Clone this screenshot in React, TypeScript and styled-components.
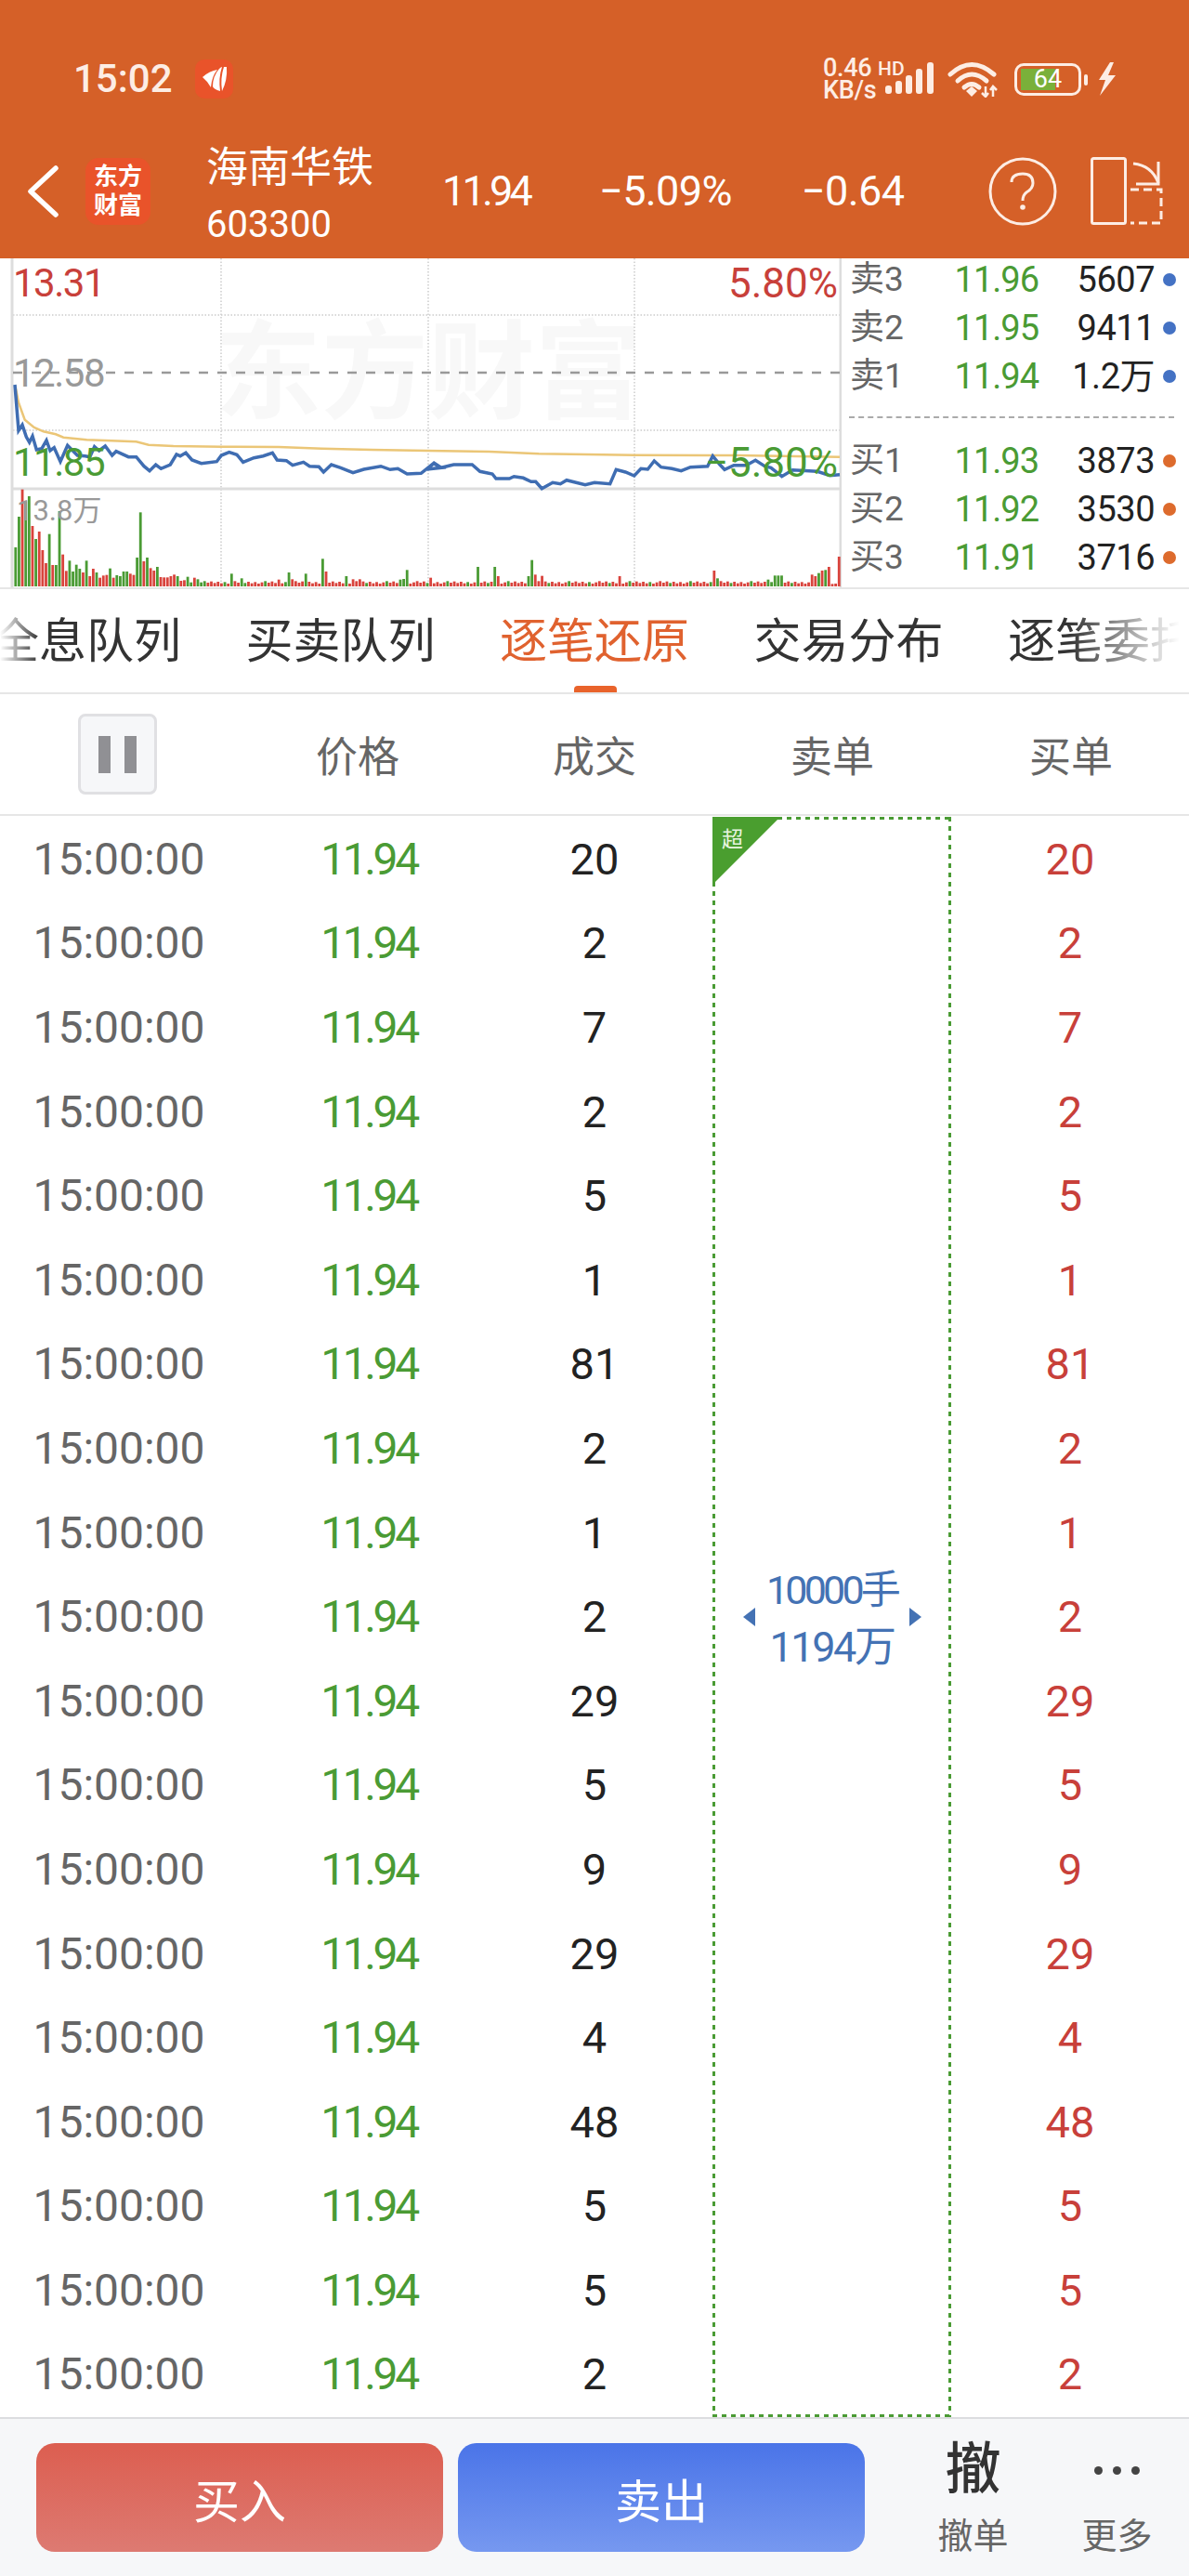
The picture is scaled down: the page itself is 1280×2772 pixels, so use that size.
import React from "react";
import styled, { createGlobalStyle } from "styled-components";

const GlobalStyle = createGlobalStyle`
    html, body {
        margin: 0;
        padding: 0;
        background: #fff;
    }
    #root {
        width: 1280px;
        height: 2772px;
        overflow: hidden;
    }
`;

const RED = "#C8403A";
const GREEN = "#4A9B34";
const BLUE = "#4472B4";
const ORANGE = "#DD6B2D";
const SOFT = "#FDEDE4";
const FONT = `Roboto, "Noto Sans CJK SC", sans-serif`;

const Page = styled.div`
    width: 1280px;
    height: 2772px;
    display: flex;
    flex-direction: column;
    font-family: ${FONT};
    background: #fff;
`;

const Header = styled.header`
    height: 278px;
    background: #d56028;
    color: #fff;
    flex-shrink: 0;
`;

const StatusBar = styled.div`
    height: 150px;
    box-sizing: border-box;
    padding: 60px 0 40px 79px;
    display: flex;
    align-items: center;
    color: ${SOFT};
`;

const Clock = styled.span`
    font-size: 42px;
    font-weight: 500;
    line-height: 50px;
    width: 131px;
`;

const AppBadge = styled.svg`
    width: 41px;
    height: 42px;
    display: block;
`;

const StatusRight = styled.div`
    margin-left: auto;
    margin-right: 78px;
    display: flex;
    align-items: center;
`;

const Speed = styled.div`
    font-size: 27px;
    font-weight: 500;
    line-height: 24px;
    width: 56px;
    margin-right: 11px;
    letter-spacing: -0.3px;
`;

const SignalBox = styled.div`
    position: relative;
    width: 52px;
    height: 40px;
    margin-right: 15px;
`;

const HdMark = styled.span`
    position: absolute;
    left: -8px;
    top: -1px;
    font-size: 21px;
    font-weight: 500;
    line-height: 20px;
`;

const Battery = styled.div`
    position: relative;
    width: 72px;
    height: 35px;
    box-sizing: border-box;
    border: 3px solid ${SOFT};
    border-radius: 10px;
    margin-left: 18px;
    display: flex;
    align-items: center;
    justify-content: center;
    &::before {
        content: "";
        position: absolute;
        left: 4px;
        top: 3px;
        bottom: 3px;
        width: 37px;
        background: #7ab03a;
    }
    &::after {
        content: "";
        position: absolute;
        right: -10px;
        top: 9px;
        width: 4px;
        height: 12px;
        border-radius: 2px;
        background: ${SOFT};
    }
`;

const BatteryText = styled.span`
    position: relative;
    font-size: 27px;
    line-height: 29px;
    color: #fff;
`;

const Bolt = styled.svg`
    width: 22px;
    height: 36px;
    margin-left: 16px;
`;

const Toolbar = styled.div`
    height: 128px;
    box-sizing: border-box;
    padding: 0 0 16px 29px;
    display: flex;
    align-items: center;
`;

const BackIcon = styled.svg`
    width: 34px;
    height: 56px;
    flex-shrink: 0;
`;

const Logo = styled.div`
    width: 70px;
    height: 72px;
    margin-left: 29px;
    flex-shrink: 0;
    border-radius: 14px;
    background: #e9532a;
    font-size: 26px;
    font-weight: 700;
    line-height: 31px;
    text-align: center;
    display: flex;
    flex-direction: column;
    justify-content: center;
`;

const NameBlock = styled.div`
    width: 254px;
    margin-left: 60px;
    margin-bottom: -10px;
    flex-shrink: 0;
`;

const StockName = styled.div`
    font-size: 45px;
    line-height: 62px;
`;

const StockCode = styled.div`
    font-size: 40px;
    line-height: 60px;
`;

const Quotes = styled.div`
    display: flex;
    gap: 75px;
    font-size: 45px;
    line-height: 50px;
`;

const Quote = styled.span<{ $tight?: boolean }>`
    letter-spacing: ${(p) => (p.$tight ? -3.8 : -0.6)}px;
`;

const HelpIcon = styled.svg`
    width: 74px;
    height: 74px;
    margin-left: auto;
    flex-shrink: 0;
`;

const FlipIcon = styled.svg`
    width: 80px;
    height: 74px;
    margin: 0 27px 0 35px;
    flex-shrink: 0;
`;

const MarketRow = styled.section`
    height: 356px;
    flex-shrink: 0;
    box-sizing: border-box;
    border-bottom: 2px solid #e6e6e6;
    display: flex;
`;

const Chart = styled.div`
    position: relative;
    width: 906px;
    height: 354px;
    flex-shrink: 0;
    overflow: hidden;
`;

const ChartSvg = styled.svg`
    position: absolute;
    inset: 0;
    display: block;
`;

const Watermark = styled.div`
    position: absolute;
    left: 231px;
    top: 62px;
    font-size: 115px;
    line-height: 124px;
    font-weight: 700;
    color: #f8f8f8;
    white-space: nowrap;
`;

const ChartLabel = styled.span<{ $color: string; $top: number; $right?: boolean; $small?: boolean }>`
    position: absolute;
    top: ${(p) => p.$top}px;
    ${(p) => (p.$right ? "right: 4px;" : `left: ${p.$small ? 18 : 14}px;`)}
    color: ${(p) => p.$color};
    font-size: ${(p) => (p.$small ? 31 : p.$right ? 44 : 42)}px;
    line-height: ${(p) => (p.$small ? 36 : 40)}px;
    letter-spacing: ${(p) => (p.$right || p.$small ? 0 : -1.5)}px;
`;

const Book = styled.div`
    flex: 1;
    box-sizing: border-box;
    padding-left: 9px;
`;

const BookGroup = styled.div`
    display: grid;
    row-gap: 6px;
`;

const BookRow = styled.div`
    height: 46px;
    display: grid;
    grid-template-columns: 72px 131px 125px 14px;
    align-items: center;
    font-size: 38px;
    line-height: 46px;
`;

const BookLabel = styled.span`
    color: #666;
    font-size: 37px;
    white-space: nowrap;
`;

const BookPrice = styled.span`
    color: ${GREEN};
    text-align: right;
    letter-spacing: -1px;
`;

const BookVolume = styled.span`
    color: #222;
    text-align: right;
    letter-spacing: -0.5px;
`;

const BookDot = styled.i<{ $color: string }>`
    width: 14px;
    height: 14px;
    border-radius: 50%;
    margin-left: 9px;
    background: ${(p) => p.$color};
`;

const BookDivider = styled.div`
    margin: 20px 16px 23px -1px;
    height: 0;
    border-top: 2px dashed #aaa;
`;

const TabBar = styled.nav`
    position: relative;
    height: 113px;
    flex-shrink: 0;
    box-sizing: border-box;
    border-bottom: 2px solid #e6e6e6;
    overflow: hidden;
    &::before,
    &::after {
        content: "";
        position: absolute;
        top: 0;
        bottom: 2px;
        z-index: 1;
    }
    &::before {
        left: 0;
        width: 42px;
        background: linear-gradient(to right, #fff, rgba(255, 255, 255, 0));
    }
    &::after {
        right: 0;
        width: 130px;
        background: linear-gradient(to left, #fff 8%, rgba(255, 255, 255, 0));
    }
`;

const TabStrip = styled.div`
    display: flex;
    gap: 69.5px;
    margin-left: -9px;
    width: 1600px;
`;

const Tab = styled.div<{ $active?: boolean }>`
    position: relative;
    flex-shrink: 0;
    width: 204px;
    height: 111px;
    box-sizing: border-box;
    padding-top: 22px;
    font-size: 51px;
    line-height: 70px;
    white-space: nowrap;
    color: ${(p) => (p.$active ? "#E0622F" : "#333")};
    ${(p) =>
        p.$active &&
        `&::after {
            content: "";
            position: absolute;
            left: 80px;
            bottom: 0;
            width: 46px;
            height: 7px;
            border-radius: 4px 4px 0 0;
            background: #e9632b;
        }`}
`;

const TableHead = styled.div`
    height: 131px;
    flex-shrink: 0;
    box-sizing: border-box;
    border-bottom: 2px solid #e6e6e6;
    display: grid;
    grid-template-columns: 256px 258px 252px 260px 254px;
    align-items: center;
    text-align: center;
    font-size: 45px;
    color: #666;
`;

const PauseButton = styled.div`
    width: 85px;
    height: 87px;
    margin-left: 84px;
    box-sizing: border-box;
    border: 3px solid #e0e0e3;
    border-radius: 8px;
    background: #f6f7f9;
    display: flex;
    align-items: center;
    justify-content: center;
    gap: 15px;
`;

const PauseBar = styled.i`
    width: 13px;
    height: 40px;
    background: #909094;
`;

const TableBody = styled.div`
    position: relative;
    height: 1725px;
    flex-shrink: 0;
    box-sizing: border-box;
    padding-top: 1px;
    border-bottom: 2px solid #dcdde0;
`;

const Row = styled.div`
    height: 90.6px;
    display: grid;
    grid-template-columns: 256px 282px 204px 282px 256px;
    align-items: center;
    text-align: center;
    font-size: 47px;
`;

const TimeCell = styled.span`
    color: #666;
    font-size: 48px;
`;

const PriceCell = styled.span`
    color: ${GREEN};
    font-size: 48px;
    letter-spacing: -3.4px;
`;

const VolumeCell = styled.span<{ $color: string }>`
    color: ${(p) => p.$color};
`;

const SellBox = styled.div`
    position: absolute;
    left: 767px;
    top: 1px;
    width: 257px;
    bottom: 0;
    box-sizing: border-box;
    background-image:
        repeating-linear-gradient(to right, ${GREEN} 0 5px, transparent 5px 10px),
        repeating-linear-gradient(to right, ${GREEN} 0 5px, transparent 5px 10px),
        repeating-linear-gradient(to bottom, ${GREEN} 0 5px, transparent 5px 10px),
        repeating-linear-gradient(to bottom, ${GREEN} 0 5px, transparent 5px 10px);
    background-size: 100% 3px, 100% 3px, 3px 100%, 3px 100%;
    background-position: top left, bottom left, top left, top right;
    background-repeat: no-repeat;
    display: flex;
    align-items: center;
    justify-content: center;
    gap: 12px;
    color: ${BLUE};
`;

const Corner = styled.div`
    position: absolute;
    left: 0;
    top: 0;
    width: 73px;
    height: 73px;
    background: #4a9e2f;
    clip-path: polygon(0 0, 100% 0, 0 100%);
`;

const CornerText = styled.span`
    position: absolute;
    left: 10px;
    top: 12px;
    font-size: 23px;
    line-height: 26px;
    color: #e8f5e0;
`;

const Arrow = styled.i<{ $right?: boolean }>`
    width: 0;
    height: 0;
    border-top: 10px solid transparent;
    border-bottom: 10px solid transparent;
    ${(p) => (p.$right ? `border-left: 13px solid ${BLUE};` : `border-right: 13px solid ${BLUE};`)}
`;

const BigOrder = styled.div`
    text-align: center;
    width: 142px;
    padding-top: 4px;
    white-space: nowrap;
`;

const BigLots = styled.div`
    font-size: 43px;
    line-height: 62px;
    letter-spacing: -3.8px;
`;

const BigAmount = styled.div`
    font-size: 45px;
    line-height: 62px;
    letter-spacing: -2.4px;
`;

const Footer = styled.footer`
    flex: 1;
    background: #f6f7f9;
    box-sizing: border-box;
    padding: 26px 0 0 39px;
    display: flex;
    align-items: flex-start;
`;

const TradeButton = styled.div<{ $from: string; $to: string }>`
    width: 438px;
    height: 117px;
    margin-right: 16px;
    border-radius: 20px;
    background: linear-gradient(to bottom, ${(p) => p.$from}, ${(p) => p.$to});
    color: #fff;
    font-size: 50px;
    display: flex;
    align-items: center;
    justify-content: center;
`;

const Actions = styled.div`
    margin-left: 23px;
    display: flex;
`;

const ActionItem = styled.div`
    width: 155px;
    display: flex;
    flex-direction: column;
    align-items: center;
`;

const ActionGlyph = styled.div`
    height: 58px;
    font-size: 60px;
    line-height: 58px;
    font-weight: 500;
    color: #333;
    display: flex;
    align-items: center;
    gap: 11px;
`;

const MoreDot = styled.i`
    width: 9px;
    height: 9px;
    border-radius: 50%;
    background: #444;
`;

const ActionLabel = styled.div`
    margin-top: 22px;
    font-size: 38px;
    line-height: 40px;
    color: #666;
`;

// traced from the reference at 3x: x/3 + offset, y/3 - 8 gives chart px
const PRICE_LEFT = [
    [48, 432], [60, 580], [72, 562], [85, 600], [95, 618], [105, 598], [118, 642], [135, 638], [150, 612], [162, 645],
    [175, 635], [195, 680], [218, 628], [250, 660], [275, 662], [290, 665], [305, 632], [320, 645], [340, 630], [362, 660],
    [375, 647], [415, 665], [440, 665], [465, 695], [483, 710], [503, 690], [520, 703], [550, 690], [570, 657], [582, 662],
    [600, 652], [620, 675], [650, 686], [700, 680], [715, 660], [740, 650], [765, 658], [785, 682], [820, 668], [850, 662],
    [880, 652], [895, 675], [925, 677], [945, 692], [980, 682], [1000, 695], [1030, 697], [1045, 714], [1070, 690], [1100, 700],
    [1140, 716], [1175, 705], [1230, 695], [1260, 706], [1285, 703], [1315, 720], [1360, 718], [1400, 686], [1425, 700],
];
const PRICE_RIGHT = [
    [0, 705], [22, 685], [45, 700], [85, 690], [145, 690], [170, 712], [210, 720], [222, 735], [265, 735], [280, 728],
    [310, 733], [335, 745], [350, 745], [370, 767], [405, 748], [430, 752], [450, 740], [510, 755], [540, 748], [590, 752],
    [610, 706], [640, 714], [668, 726], [690, 703], [712, 705], [733, 678], [755, 698], [790, 703], [820, 710], [850, 698],
    [905, 695], [922, 662], [945, 690], [960, 706], [990, 692], [1030, 692], [1060, 676], [1090, 695], [1110, 700], [1145, 728],
    [1180, 707], [1260, 712], [1300, 725], [1332, 722],
];
const AVG_LEFT = [
    [50, 440], [60, 490], [80, 545], [110, 570], [140, 583], [180, 592], [205, 602], [280, 610], [440, 616], [480, 626],
    [560, 630], [715, 632], [900, 633], [1040, 638], [1200, 642],
];
const AVG_RIGHT = [[0, 645], [200, 648], [360, 655], [668, 659], [1000, 660], [1332, 665]];

const toPoints = (left: number[][], right: number[][]) =>
    [...left.map(([x, y]) => [x / 3, y / 3 - 8]), ...right.map(([x, y]) => [460 + x / 3, y / 3 - 8])]
        .map(([x, y]) => `${x.toFixed(1)},${y.toFixed(1)}`)
        .join(" ");

// positive = green bar, negative = red bar
const LEAD_BARS = [
    126, 225, -313, 275, 291, -195, 153, -177, -117, -75, 169, -69, 69, 243, -103, -50, 83, 48, 70, 57, -45, 83, -33, -57, 45,
    -28, -35, -37, 58, -28, 36, 33, 48, 48, -41, -37, 93, 239, -81, 93, -59, -51, 63, -30, -29, -29, -33, -38, 33, -18, -20, 31,
    13, -28, 23, 13,
];
const SPIKES: [number, number][] = [
    [745, 41], [755, -17], [780, 26], [900, -22], [935, 45], [945, -23], [992, 41], [1037, 89], [1048, -48], [1113, 33],
    [1145, -23], [1160, -23], [1290, 22], [1300, 24], [1310, 53], [1390, -28], [1545, 63], [1602, 63], [1612, -33], [1705, 33],
    [1715, 85], [1725, -38], [1745, 38], [1755, -34], [2000, -33], [2302, -51], [2312, 26], [2480, 22], [2500, 35], [2510, 35],
    [2520, 35], [2620, -38], [2632, -33], [2645, 43], [2655, -51], [2668, 53], [2678, -63], [2690, -8], [2710, -96],
];

const BARS = Array.from({ length: 245 }, (_, i) => {
    if (i < LEAD_BARS.length) return LEAD_BARS[i];
    const small = 9 + ((i * 13) % 9);
    return i % 6 === 2 ? small : -small;
});
SPIKES.forEach(([x, h]) => {
    BARS[Math.round((x - 50) / 10.9)] = h;
});

const VolumeBars = () => (
    <>
        {BARS.map((h, i) => (
            <rect
                key={i}
                x={15.4 + i * 3.633}
                y={353 - Math.abs(h) / 3}
                width={2.8}
                height={Math.abs(h) / 3}
                fill={h > 0 ? "#4A9B34" : "#D9433C"}
            />
        ))}
    </>
);

const ASKS = [
    ["卖3", "11.96", "5607"],
    ["卖2", "11.95", "9411"],
    ["卖1", "11.94", "1.2万"],
];
const BIDS = [
    ["买1", "11.93", "3873"],
    ["买2", "11.92", "3530"],
    ["买3", "11.91", "3716"],
];
const TABS = ["全息队列", "买卖队列", "逐笔还原", "交易分布", "逐笔委托"];
const TRADES = [20, 2, 7, 2, 5, 1, 81, 2, 1, 2, 29, 5, 9, 29, 4, 48, 5, 5, 2];

const BookRows = ({ rows, dot }: { rows: string[][]; dot: string }) => (
    <BookGroup>
        {rows.map(([label, price, volume]) => (
            <BookRow key={label}>
                <BookLabel>{label}</BookLabel>
                <BookPrice>{price}</BookPrice>
                <BookVolume>{volume}</BookVolume>
                <BookDot $color={dot} />
            </BookRow>
        ))}
    </BookGroup>
);

export default function App() {
    return (
        <Page>
            <GlobalStyle />
            <Header>
                <StatusBar>
                    <Clock>15:02</Clock>
                    <AppBadge viewBox="0 0 41 42">
                        <rect width="41" height="42" rx="10" fill="#E9532A" />
                        <path d="M8 19Q16 12 24 11Q18 18 17 30Q14 24 8 19Z" fill="#fff" />
                        <path d="M26 10Q28 8 29 8Q25 20 27 34Q20 32 19 29Q19 18 26 10Z" fill="#fff" />
                        <path d="M31 8L34 8Q35 22 29 34Q27 20 31 8Z" fill="#fff" />
                    </AppBadge>
                    <StatusRight>
                        <Speed>
                            0.46
                            <br />
                            KB/s
                        </Speed>
                        <SignalBox>
                            <HdMark>HD</HdMark>
                            <svg width="52" height="40" viewBox="0 0 52 40">
                                <g fill={SOFT}>
                                    <rect x="0" y="27" width="7" height="9" rx="3" />
                                    <rect x="11" y="22" width="7" height="14" rx="3" />
                                    <rect x="22" y="16" width="7" height="20" rx="3" />
                                    <rect x="33" y="9" width="7" height="27" rx="3" />
                                    <rect x="45" y="2" width="7" height="34" rx="3" />
                                </g>
                            </svg>
                        </SignalBox>
                        <svg width="54" height="40" viewBox="0 0 54 40">
                            <g fill="none" stroke={SOFT} strokeWidth="5" strokeLinecap="round">
                                <path d="M3 15Q26 -6 50 15" />
                                <path d="M11 22Q26 8 42 22" />
                                <path d="M18 29Q26 22 34 29" />
                            </g>
                            <path d="M20 33L26 39L32 33L26 28Z" fill={SOFT} />
                            <g stroke={SOFT} strokeWidth="2.5" fill="none">
                                <path d="M41 28V39M37 35L41 39L44 35" />
                                <path d="M49 39V28M46 32L49 28L53 32" />
                            </g>
                        </svg>
                        <Battery>
                            <BatteryText>64</BatteryText>
                        </Battery>
                        <Bolt viewBox="0 0 22 36">
                            <path d="M15 0L3 19H10L4 36L21 14H13L19 0Z" fill={SOFT} />
                        </Bolt>
                    </StatusRight>
                </StatusBar>
                <Toolbar>
                    <BackIcon viewBox="0 0 34 56">
                        <path d="M31 3L4 28L31 53" fill="none" stroke="#fff" strokeWidth="5.5" strokeLinecap="round" strokeLinejoin="round" />
                    </BackIcon>
                    <Logo>
                        <span>东方</span>
                        <span>财富</span>
                    </Logo>
                    <NameBlock>
                        <StockName>海南华铁</StockName>
                        <StockCode>603300</StockCode>
                    </NameBlock>
                    <Quotes>
                        <Quote $tight>11.94</Quote>
                        <Quote>−5.09%</Quote>
                        <Quote>−0.64</Quote>
                    </Quotes>
                    <HelpIcon viewBox="0 0 74 74">
                        <circle cx="37" cy="37" r="35" fill="none" stroke={SOFT} strokeWidth="3" />
                        <path d="M25 27Q25 18 37 18Q48 18 48 28Q48 34 41 38Q37 41 37 47" fill="none" stroke={SOFT} strokeWidth="3" />
                        <circle cx="37" cy="54" r="2.8" fill={SOFT} />
                    </HelpIcon>
                    <FlipIcon viewBox="0 0 80 74">
                        <g fill="none" stroke={SOFT} strokeWidth="3">
                            <rect x="2.5" y="1.5" width="36" height="70" rx="2" />
                            <path d="M47 7Q67 9 74 28" />
                            <path d="M74 5V29H50" />
                            <path d="M44 35H77V71H44" strokeDasharray="9 5" />
                        </g>
                    </FlipIcon>
                </Toolbar>
            </Header>

            <MarketRow>
                <Chart>
                    <Watermark>东方财富</Watermark>
                    <ChartSvg width="906" height="354" viewBox="0 0 906 354">
                        <g stroke="#ccc" strokeWidth="1.5" strokeDasharray="1.5 2">
                            <path d="M14 61H904M14 185H904" />
                            <path d="M238 0V354M461 0V354M683 0V354" />
                        </g>
                        <path d="M13 0V354M905 0V354" stroke="#ddd" strokeWidth="3" />
                        <path d="M13 248H904" stroke="#ddd" strokeWidth="3" />
                        <path d="M14 123H904" stroke="#999" strokeWidth="2.5" strokeDasharray="10 10" />
                        <polyline points={toPoints(AVG_LEFT, AVG_RIGHT)} fill="none" stroke="#EBC677" strokeWidth="2.5" />
                        <polyline points={toPoints(PRICE_LEFT, PRICE_RIGHT)} fill="none" stroke="#3F6DB2" strokeWidth="3.5" />
                        <VolumeBars />
                    </ChartSvg>
                    <ChartLabel $color={RED} $top={7}>13.31</ChartLabel>
                    <ChartLabel $color={RED} $top={7} $right>5.80%</ChartLabel>
                    <ChartLabel $color="#999" $top={104}>12.58</ChartLabel>
                    <ChartLabel $color={GREEN} $top={200}>11.85</ChartLabel>
                    <ChartLabel $color={GREEN} $top={200} $right>−5.80%</ChartLabel>
                    <ChartLabel $color="#999" $top={254} $small>13.8万</ChartLabel>
                </Chart>
                <Book>
                    <BookRows rows={ASKS} dot="#4472C4" />
                    <BookDivider />
                    <BookRows rows={BIDS} dot={ORANGE} />
                </Book>
            </MarketRow>

            <TabBar>
                <TabStrip>
                    {TABS.map((tab, i) => (
                        <Tab key={tab} $active={i === 2}>
                            {tab}
                        </Tab>
                    ))}
                </TabStrip>
            </TabBar>

            <TableHead>
                <PauseButton>
                    <PauseBar />
                    <PauseBar />
                </PauseButton>
                <span>价格</span>
                <span>成交</span>
                <span>卖单</span>
                <span>买单</span>
            </TableHead>

            <TableBody>
                {TRADES.map((n, i) => (
                    <Row key={i}>
                        <TimeCell>15:00:00</TimeCell>
                        <PriceCell>11.94</PriceCell>
                        <VolumeCell $color="#222">{n}</VolumeCell>
                        <span />
                        <VolumeCell $color={RED}>{n}</VolumeCell>
                    </Row>
                ))}
                <SellBox>
                    <Corner />
                    <CornerText>超</CornerText>
                    <Arrow />
                    <BigOrder>
                        <BigLots>10000手</BigLots>
                        <BigAmount>1194万</BigAmount>
                    </BigOrder>
                    <Arrow $right />
                </SellBox>
            </TableBody>

            <Footer>
                <TradeButton $from="#DC5E50" $to="#DD7A72">买入</TradeButton>
                <TradeButton $from="#4A74E8" $to="#7698F0">卖出</TradeButton>
                <Actions>
                    <ActionItem>
                        <ActionGlyph>撤</ActionGlyph>
                        <ActionLabel>撤单</ActionLabel>
                    </ActionItem>
                    <ActionItem>
                        <ActionGlyph>
                            <MoreDot />
                            <MoreDot />
                            <MoreDot />
                        </ActionGlyph>
                        <ActionLabel>更多</ActionLabel>
                    </ActionItem>
                </Actions>
            </Footer>
        </Page>
    );
}
